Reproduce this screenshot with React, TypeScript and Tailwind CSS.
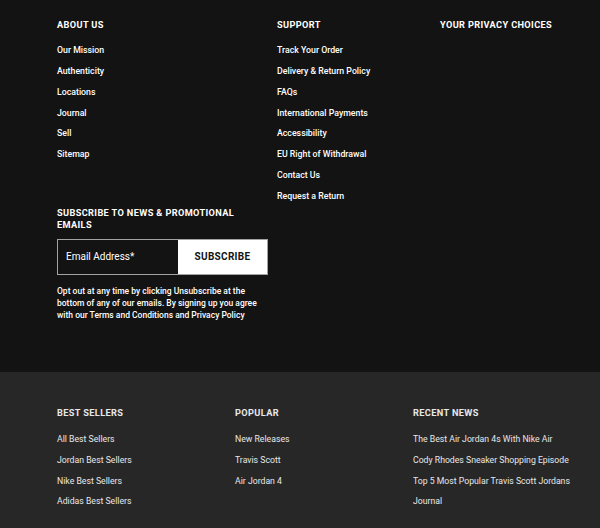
const aboutLinks = ['Our Mission', 'Authenticity', 'Locations', 'Journal', 'Sell', 'Sitemap'];

const supportLinks = [
  'Track Your Order',
  'Delivery & Return Policy',
  'FAQs',
  'International Payments',
  'Accessibility',
  'EU Right of Withdrawal',
  'Contact Us',
  'Request a Return',
];

const bottomColumns = [
  {
    title: 'Best Sellers',
    links: ['All Best Sellers', 'Jordan Best Sellers', 'Nike Best Sellers', 'Adidas Best Sellers'],
  },
  {
    title: 'Popular',
    links: ['New Releases', 'Travis Scott', 'Air Jordan 4'],
  },
  {
    title: 'Recent News',
    links: [
      'The Best Air Jordan 4s With Nike Air',
      'Cody Rhodes Sneaker Shopping Episode',
      'Top 5 Most Popular Travis Scott Jordans',
      'Journal',
    ],
  },
];

const Heading = ({ children }: { children: React.ReactNode }) => (
  <h3 className="text-[9.2px] leading-[12px] font-bold uppercase tracking-[0.04em]">{children}</h3>
);

const LinkList = ({ links }: { links: string[] }) => (
  <ul className="mt-[9px]">
    {links.map((l) => (
      <li key={l} className="text-[8.75px] leading-[20.85px] font-medium whitespace-nowrap">
        <a href="#">{l}</a>
      </li>
    ))}
  </ul>
);

export default function App() {
  return (
    <footer className="min-h-screen bg-[#272727] font-['Roboto',sans-serif] antialiased">
      {/* Main footer links and newsletter */}
      <div className="bg-[#131313] text-white px-[57px] pt-[19px] pb-[51px]">
        <div className="flex">
          <div className="w-[220px] shrink-0">
            <Heading>About Us</Heading>
            <LinkList links={aboutLinks} />
          </div>
          <div className="w-[163px] shrink-0">
            <Heading>Support</Heading>
            <LinkList links={supportLinks} />
          </div>
          <div className="whitespace-nowrap">
            <Heading>Your Privacy Choices</Heading>
          </div>
        </div>

        <div className="w-[211px]">
          <Heading>Subscribe to News &amp; Promotional Emails</Heading>
          <form className="mt-[8px] flex h-[36px] border border-[#a3a3a3]">
            <input
              type="email"
              placeholder="Email Address*"
              className="w-[120px] bg-transparent px-[8px] text-[10px] text-white placeholder:text-white outline-none"
            />
            <button type="button" className="flex-1 bg-white text-[10px] font-bold uppercase tracking-[0.03em] text-[#131313]">
              Subscribe
            </button>
          </form>
          <p className="mt-[10px] text-[8.5px] leading-[12px] font-medium">
            Opt out at any time by clicking Unsubscribe at the bottom of any of our emails. By signing up you agree
            with our Terms and Conditions and Privacy Policy
          </p>
        </div>
      </div>

      {/* Secondary link columns */}
      <div className="grid grid-cols-[178px_178px_1fr] pl-[57px] pt-[35px] pb-[20px] text-[#e8e8e8]">
        {bottomColumns.map((col) => (
          <div key={col.title}>
            <Heading>{col.title}</Heading>
            <ul className="mt-[10.5px]">
              {col.links.map((l) => (
                <li key={l} className="text-[8.7px] leading-[20.7px] whitespace-nowrap">
                  <a href="#">{l}</a>
                </li>
              ))}
            </ul>
          </div>
        ))}
      </div>
    </footer>
  );
}
